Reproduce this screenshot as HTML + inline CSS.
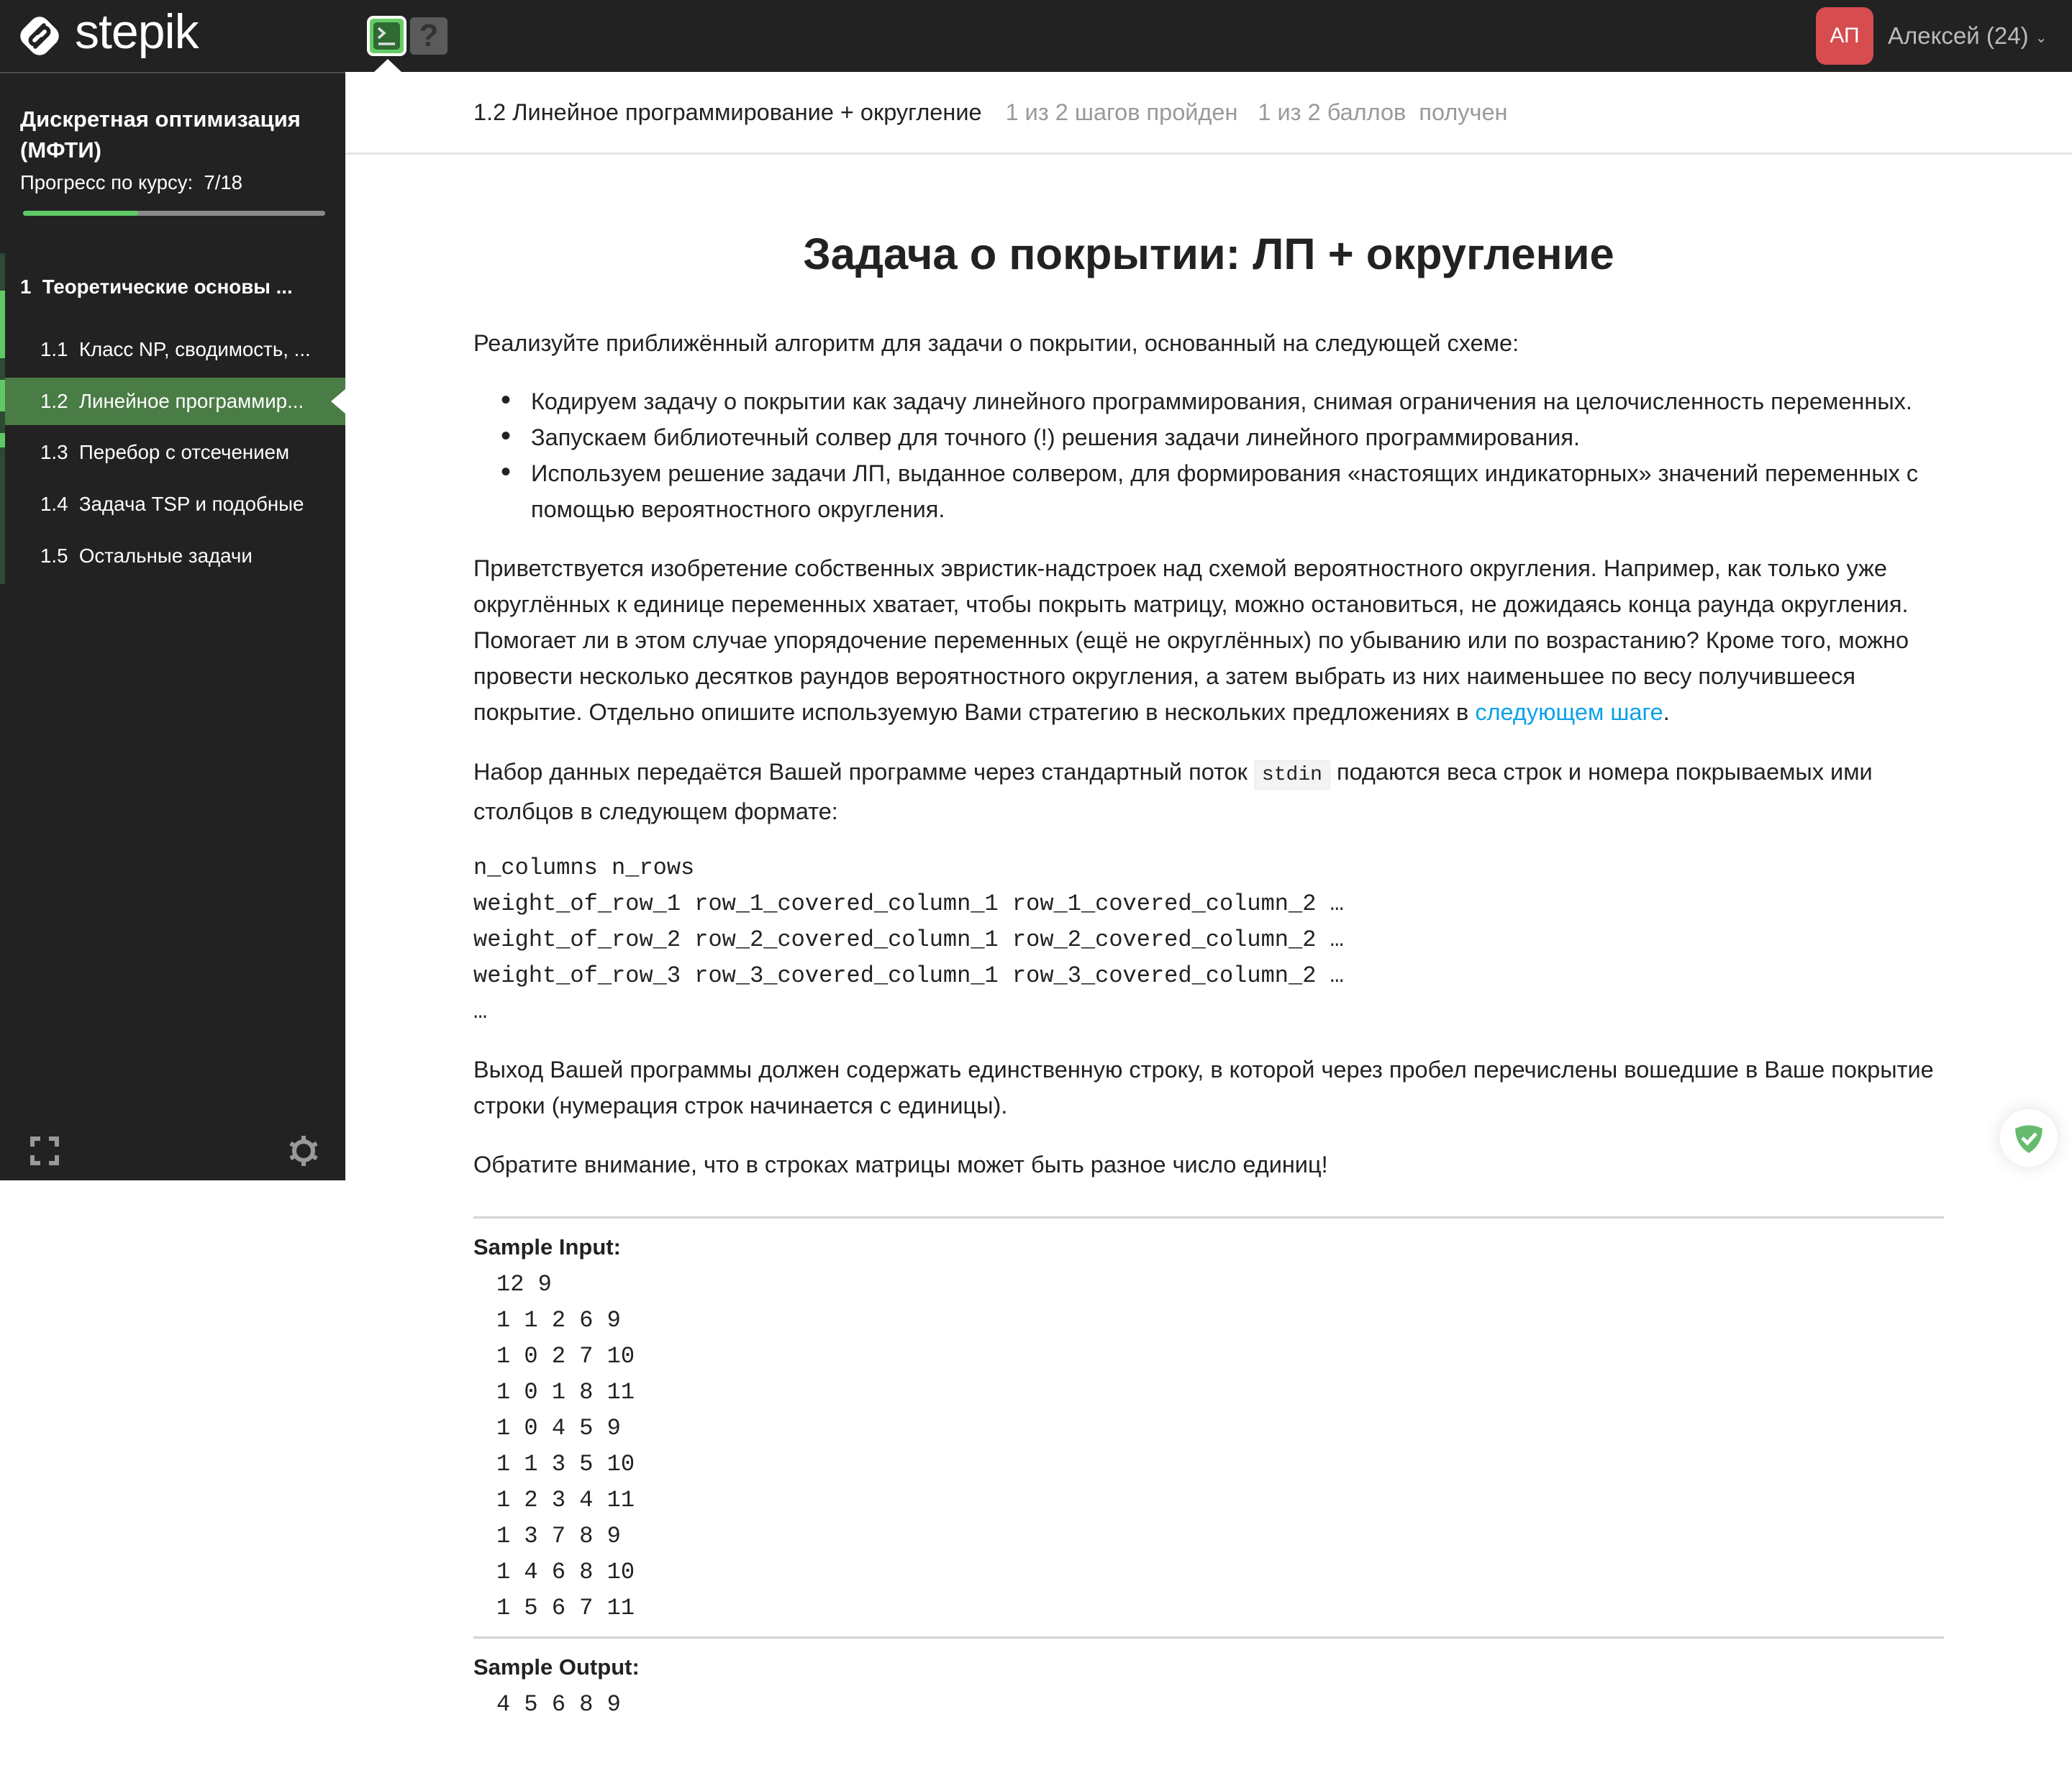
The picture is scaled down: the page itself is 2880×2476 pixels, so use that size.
<!DOCTYPE html>
<html><head><meta charset="utf-8"><style>
*{margin:0;padding:0;box-sizing:border-box}
body{width:2880px;height:2476px;background:#fff;font-family:"Liberation Sans",sans-serif;color:#222;position:relative;overflow:hidden}
.abs{position:absolute;white-space:nowrap}
#hdr{position:absolute;left:0;top:0;width:2880px;height:100px;background:#222}
#side{position:absolute;left:0;top:100px;width:480px;height:1541px;background:#222;border-top:2px solid #4a4a4a}
.it{position:absolute;left:0;width:480px;height:66px;line-height:66px;padding-left:56px;color:#fff;font-size:27.7px;white-space:nowrap}
.t{font-size:32.5px;line-height:50px;color:#222}
.mono{font-family:"Liberation Mono",monospace;font-size:32px;color:#222}
.c{position:absolute;white-space:nowrap}
.b{font-size:40px}
</style></head><body>
<div id="hdr"></div>
<!-- logo -->
<svg class="abs" style="left:21px;top:17px" width="68" height="66" viewBox="0 0 68 66">
<rect x="11" y="10" width="46" height="46" rx="14" fill="#fff" transform="rotate(45 34 33)"/>
<path d="M40 18 L23 35 a5.5 5.5 0 0 0 8 8 L37 37" stroke="#222" stroke-width="5.5" fill="none" stroke-linecap="round"/>
<path d="M28 48 L45 31 a5.5 5.5 0 0 0 -8 -8 L31 29" stroke="#222" stroke-width="5.5" fill="none" stroke-linecap="round"/>
</svg>
<div class="abs" style="left:104px;top:5px;font-size:68px;color:#fff;letter-spacing:-1px">stepik</div>
<!-- terminal btn -->
<div class="abs" style="left:510px;top:22px;width:55px;height:56px;border:4px solid #fff;border-radius:9px;background:#66cc66;padding:5px">
<div style="width:100%;height:100%;background:#2f6a33;border-radius:5px;position:relative">
<svg width="37" height="38" viewBox="0 0 37 38" style="position:absolute;left:0;top:0"><path d="M7 8 L15 15 L7 22" stroke="#ddd" stroke-width="3.5" fill="none"/><path d="M7 30 H30" stroke="#ddd" stroke-width="3.5"/></svg></div></div>
<div class="abs" style="left:570px;top:24px;width:52px;height:52px;background:#5b5b5b;border-radius:6px;color:#333;font-size:44px;font-weight:bold;text-align:center;line-height:52px">?</div>
<div class="abs" style="left:520px;top:82px;width:0;height:0;border-left:19px solid transparent;border-right:19px solid transparent;border-bottom:18px solid #fff"></div>
<!-- user -->
<div class="abs" style="left:2524px;top:10px;width:80px;height:80px;background:#d64c4f;border-radius:14px;color:#fff;font-size:30px;text-align:center;line-height:80px">АП</div>
<div class="abs" style="left:2624px;top:31px;font-size:33px;color:#bbb">Алексей (24) <span style="font-size:20px;vertical-align:middle">⌄</span></div>
<!-- sidebar -->
<div id="side">
<div class="abs" style="left:28px;top:42px;font-size:31px;font-weight:bold;color:#fff;line-height:43px">Дискретная оптимизация<br>(МФТИ)</div>
<div class="abs" style="left:28px;top:136px;font-size:27.5px;color:#fff">Прогресс по курсу:&nbsp; 7/18</div>
<div class="abs" style="left:32px;top:191px;width:420px;height:7px;background:#8a8a8a;border-radius:4px"><div style="width:160px;height:7px;background:#5fca64;border-radius:4px"></div></div>
<div class="abs" style="left:0;top:250px;width:7px;height:460px;background:#2d4a32"></div>
<div class="abs" style="left:0;top:302px;width:7px;height:94px;background:#5fca64"></div>
<div class="abs" style="left:0;top:426px;width:7px;height:44px;background:#5fca64"></div>
<div class="abs" style="left:0;top:500px;width:7px;height:20px;background:#5fca64"></div>
<div class="abs" style="left:28px;top:277px;font-size:27.7px;font-weight:bold;color:#fff;line-height:40px">1&nbsp; Теоретические основы ...</div>
<div class="it" style="top:351px">1.1&nbsp; Класс NP, сводимость, ...</div>
<div class="it" style="top:423px;left:7px;width:473px;padding-left:49px;background:#4a7c45">1.2&nbsp; Линейное программир...</div>
<div class="abs" style="left:460px;top:439px;width:0;height:0;border-top:17px solid transparent;border-bottom:17px solid transparent;border-right:20px solid #fff"></div>
<div class="it" style="top:494px">1.3&nbsp; Перебор с отсечением</div>
<div class="it" style="top:566px">1.4&nbsp; Задача TSP и подобные</div>
<div class="it" style="top:638px">1.5&nbsp; Остальные задачи</div>
<svg class="abs" style="left:42px;top:1478px" width="40" height="40" viewBox="0 0 40 40" fill="none" stroke="#999" stroke-width="6"><path d="M3 14V3H14M26 3H37V14M37 26V37H26M14 37H3V26"/></svg>
<svg class="abs" style="left:401px;top:1477px" width="42" height="42" viewBox="0 0 42 42"><g fill="#999"><rect x="18" y="0" width="6" height="42"/><rect x="18" y="0" width="6" height="42" transform="rotate(60 21 21)"/><rect x="18" y="0" width="6" height="42" transform="rotate(120 21 21)"/><circle cx="21" cy="21" r="16"/></g><circle cx="21" cy="21" r="10" fill="#222"/></svg>
</div>
<!-- content header -->
<div class="abs" style="left:480px;top:212px;width:2400px;height:3px;background:#e4e4e4"></div>
<div class="c" style="left:658px;top:138px;font-size:32.5px;color:#222">1.2 Линейное программирование + округление <span style="color:#999;margin-left:24px">1 из 2 шагов пройден</span><span style="color:#999;margin-left:28px">1 из 2 баллов&nbsp; получен</span></div>
<div class="c" style="left:658px;width:2044px;text-align:center;top:318px;font-size:61.5px;font-weight:bold;color:#222">Задача о покрытии: ЛП + округление</div>
<div class="c t" style="left:658px;top:452px">Реализуйте приближённый алгоритм для задачи о покрытии, основанный на следующей схеме:</div>
<div class="c t b" style="left:696px;top:531px">•</div><div class="c t" style="left:738px;top:533px">Кодируем задачу о покрытии как задачу линейного программирования, снимая ограничения на целочисленность переменных.</div>
<div class="c t b" style="left:696px;top:581px">•</div><div class="c t" style="left:738px;top:583px">Запускаем библиотечный солвер для точного (!) решения задачи линейного программирования.</div>
<div class="c t b" style="left:696px;top:631px">•</div><div class="c t" style="left:738px;top:633px">Используем решение задачи ЛП, выданное солвером, для формирования «настоящих индикаторных» значений переменных с<br>помощью вероятностного округления.</div>
<div class="c t" style="left:658px;top:765px">Приветствуется изобретение собственных эвристик-надстроек над схемой вероятностного округления. Например, как только уже<br>округлённых к единице переменных хватает, чтобы покрыть матрицу, можно остановиться, не дожидаясь конца раунда округления.<br>Помогает ли в этом случае упорядочение переменных (ещё не округлённых) по убыванию или по возрастанию? Кроме того, можно<br>провести несколько десятков раундов вероятностного округления, а затем выбрать из них наименьшее по весу получившееся<br>покрытие. Отдельно опишите используемую Вами стратегию в нескольких предложениях в <span style="color:#0aa2e8">следующем шаге</span>.</div>
<div class="c t" style="left:658px;top:1048px">Набор данных передаётся Вашей программе через стандартный поток <span style="font-family:'Liberation Mono',monospace;font-size:28px;background:#f3f3f3;border:1px solid #e8e8e8;border-radius:4px;padding:4px 10px">stdin</span> подаются веса строк и номера покрываемых ими<br>столбцов в следующем формате:</div>
<div class="c mono" style="left:658px;top:1182px;line-height:50px">n_columns n_rows<br>weight_of_row_1 row_1_covered_column_1 row_1_covered_column_2 …<br>weight_of_row_2 row_2_covered_column_1 row_2_covered_column_2 …<br>weight_of_row_3 row_3_covered_column_1 row_3_covered_column_2 …<br>…</div>
<div class="c t" style="left:658px;top:1462px">Выход Вашей программы должен содержать единственную строку, в которой через пробел перечислены вошедшие в Ваше покрытие<br>строки (нумерация строк начинается с единицы).</div>
<div class="c t" style="left:658px;top:1594px">Обратите внимание, что в строках матрицы может быть разное число единиц!</div>
<div class="abs" style="left:658px;top:1691px;width:2044px;height:3px;background:#d4d4d4"></div>
<div class="c t" style="left:658px;top:1709px;font-weight:bold;font-size:31px">Sample Input:</div>
<div class="c mono" style="left:690px;top:1761px;line-height:50px">12 9<br>1 1 2 6 9<br>1 0 2 7 10<br>1 0 1 8 11<br>1 0 4 5 9<br>1 1 3 5 10<br>1 2 3 4 11<br>1 3 7 8 9<br>1 4 6 8 10<br>1 5 6 7 11</div>
<div class="abs" style="left:658px;top:2275px;width:2044px;height:3px;background:#d4d4d4"></div>
<div class="c t" style="left:658px;top:2293px;font-weight:bold;font-size:31px">Sample Output:</div>
<div class="c mono" style="left:690px;top:2345px;line-height:50px">4 5 6 8 9</div>
<!-- shield -->
<div class="abs" style="left:2780px;top:1542px;width:80px;height:80px;border-radius:50%;background:#fff;box-shadow:0 0 24px rgba(0,0,0,0.12)">
<svg width="80" height="80" viewBox="0 0 80 80"><path d="M21 27 Q40 18 59 27 Q58 50 40 61 Q22 50 21 27Z" fill="#65bb6e"/><path d="M31 40 L38 47 L50 34" stroke="#fff" stroke-width="5" fill="none"/></svg></div>
</body></html>
